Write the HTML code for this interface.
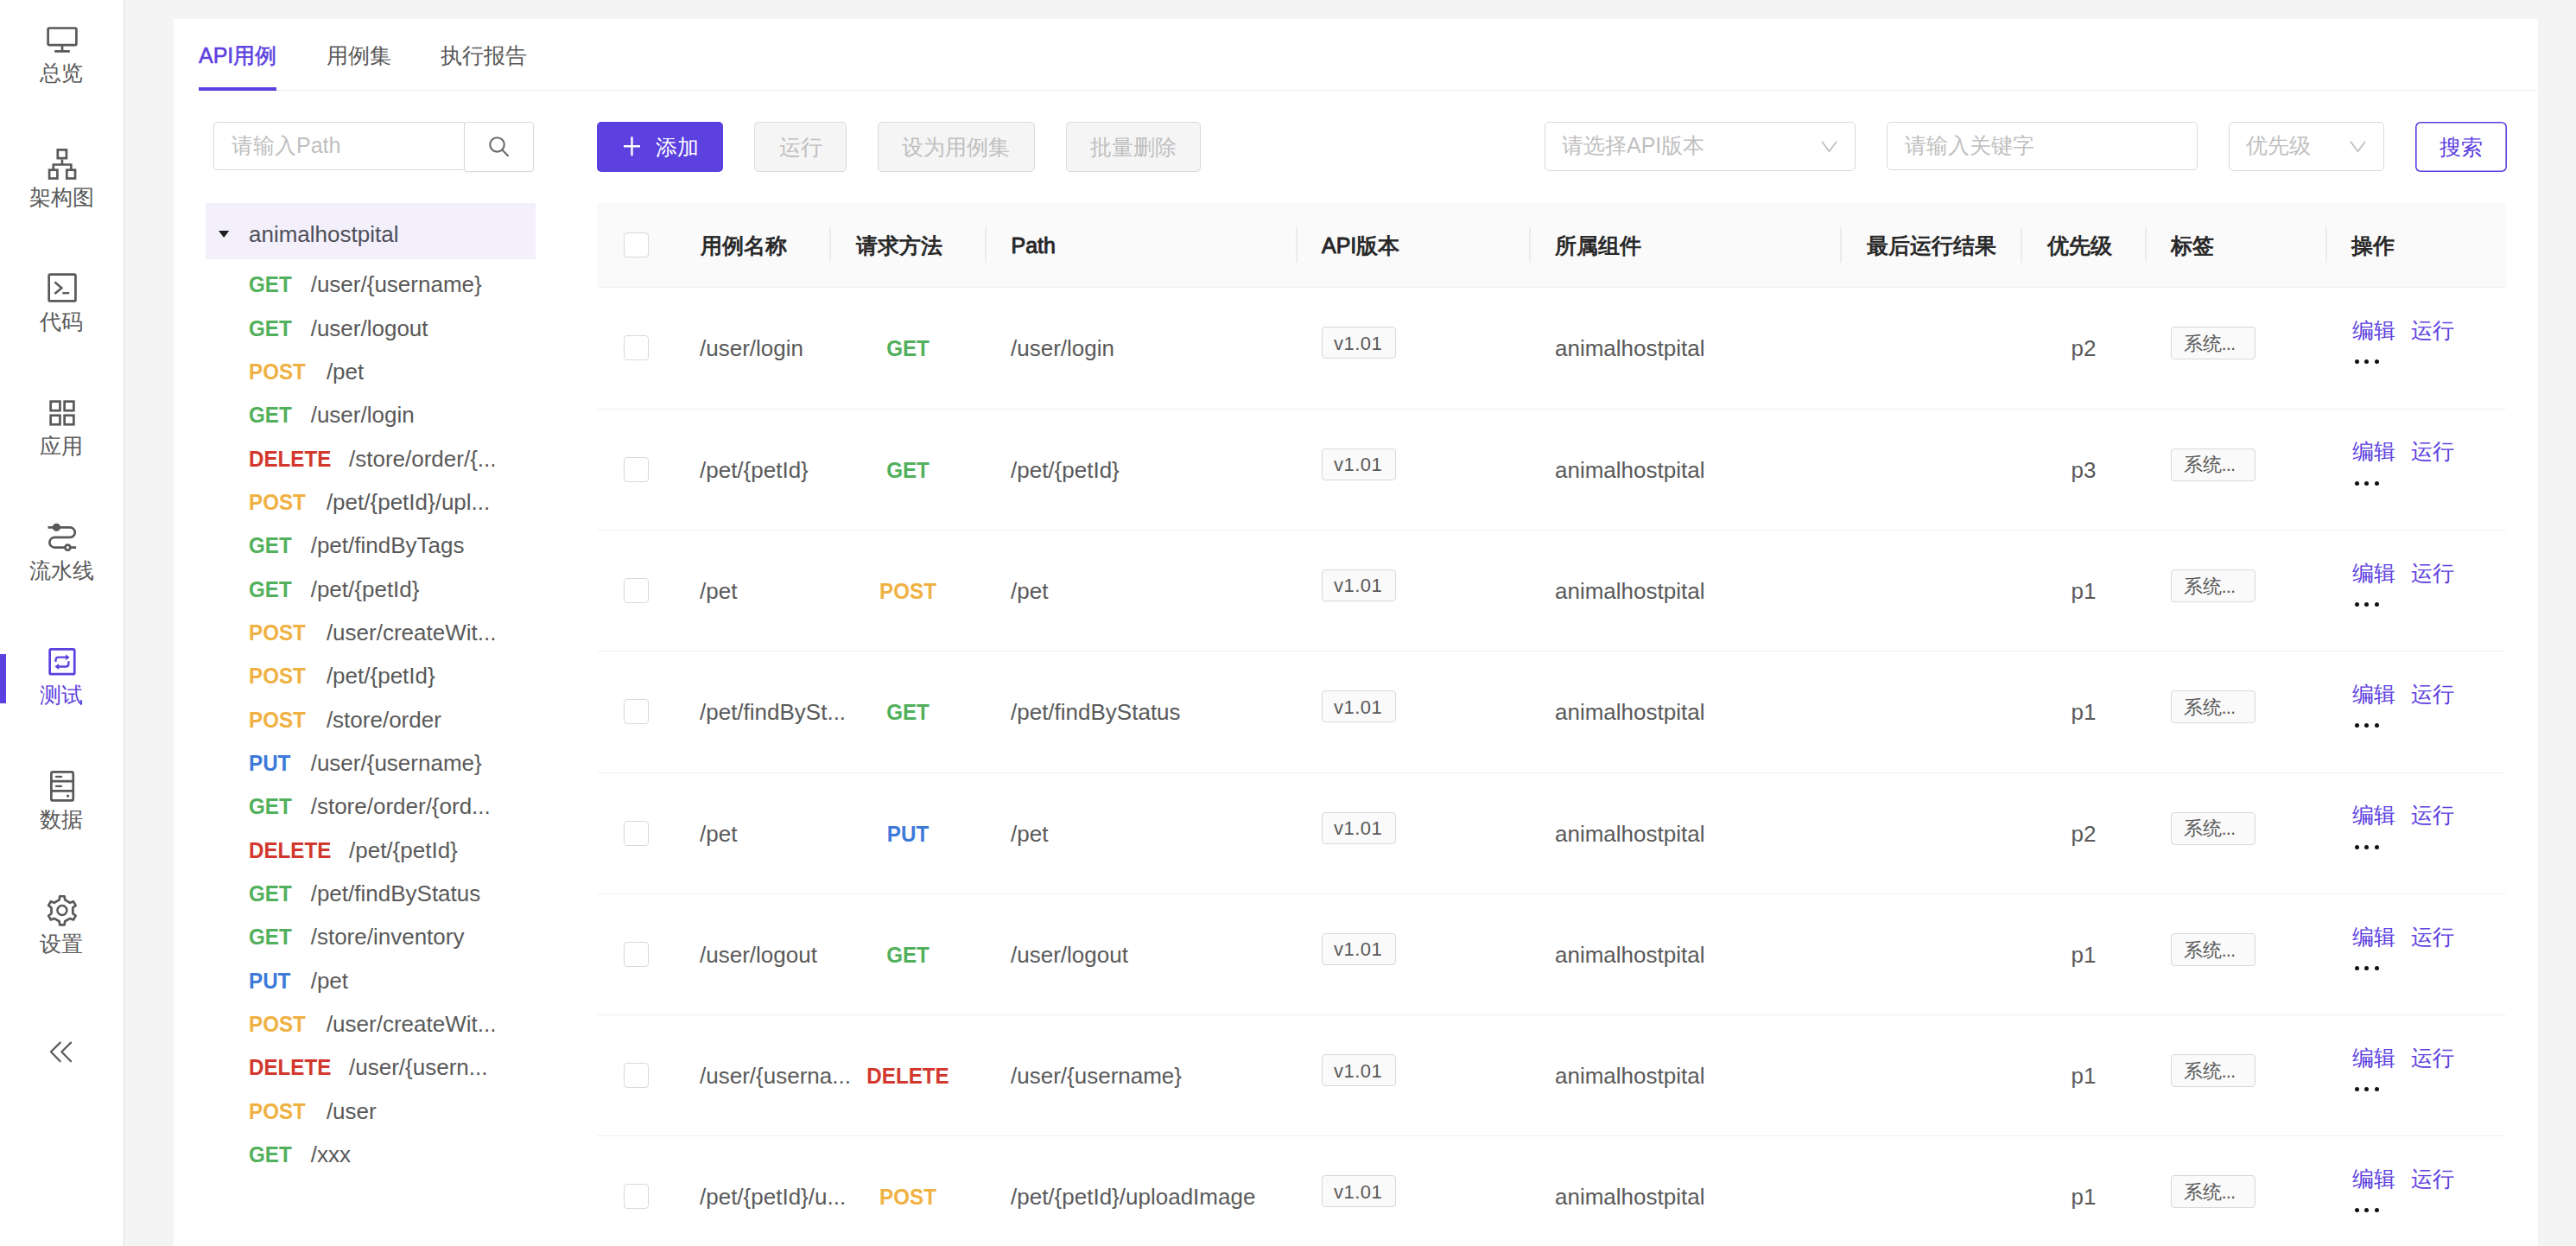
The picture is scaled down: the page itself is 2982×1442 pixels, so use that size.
<!DOCTYPE html>
<html><head><meta charset="utf-8"><style>
html,body{margin:0;padding:0;width:2982px;height:1442px;overflow:hidden;background:#f4f4f4;font-family:"Liberation Sans",sans-serif}
.t{position:absolute;white-space:nowrap}
</style></head><body>
<div style="position:absolute;left:0px;top:0px;width:143px;height:1442px;background:#fff"></div>
<div style="position:absolute;left:143px;top:0px;width:1px;height:1442px;background:#dedede"></div>
<div class="t" style="left:-228.7px;width:600px;text-align:center;top:71.8px;font-size:25px;line-height:25px;color:#595959;font-weight:normal;">总览</div>
<div class="t" style="left:-228.7px;width:600px;text-align:center;top:215.8px;font-size:25px;line-height:25px;color:#595959;font-weight:normal;">架构图</div>
<div class="t" style="left:-228.7px;width:600px;text-align:center;top:359.8px;font-size:25px;line-height:25px;color:#595959;font-weight:normal;">代码</div>
<div class="t" style="left:-228.7px;width:600px;text-align:center;top:503.8px;font-size:25px;line-height:25px;color:#595959;font-weight:normal;">应用</div>
<div class="t" style="left:-228.7px;width:600px;text-align:center;top:647.8px;font-size:25px;line-height:25px;color:#595959;font-weight:normal;">流水线</div>
<div class="t" style="left:-228.7px;width:600px;text-align:center;top:791.8px;font-size:25px;line-height:25px;color:#5c40e0;font-weight:normal;">测试</div>
<div class="t" style="left:-228.7px;width:600px;text-align:center;top:935.8px;font-size:25px;line-height:25px;color:#595959;font-weight:normal;">数据</div>
<div class="t" style="left:-228.7px;width:600px;text-align:center;top:1079.8px;font-size:25px;line-height:25px;color:#595959;font-weight:normal;">设置</div>
<div style="position:absolute;left:0px;top:757px;width:7px;height:57px;background:#5c40e0"></div>
<svg style="position:absolute;left:0;top:0" width="143" height="1442" viewBox="0 0 143 1442" fill="none" stroke="#595959" stroke-width="2.7">
<rect x="55.6" y="32.5" width="32.8" height="19.6" rx="1.5"/>
<path d="M72,53 V59.4 M63.2,59.4 H80.8"/>
<rect x="66.8" y="173.4" width="10.1" height="9.7"/>
<path d="M71.9,184.4 V190.5 M61.8,196.7 V190.5 H82.3 V196.7"/>
<rect x="57.1" y="196.7" width="9.3" height="9.8"/>
<rect x="77.3" y="196.7" width="9.7" height="9.8"/>
<rect x="56.65" y="317.55" width="30.8" height="30.9" rx="1.5"/>
<path d="M63.4,326.5 L71.4,333.3 L63.4,340" stroke-width="2.5"/>
<path d="M72.3,339.2 H80.2" stroke-width="2.3"/>
<rect x="58.65" y="464.65" width="10.8" height="10.5"/>
<rect x="74.65" y="464.65" width="10.7" height="10.5"/>
<rect x="58.65" y="480.75" width="10.8" height="10.5"/>
<rect x="74.65" y="480.75" width="10.7" height="10.5"/>
<path d="M55.5,610.4 H81 A5.75,5.75 0 0 1 81,621.9 H63.2 A5.85,5.85 0 0 0 63.2,633.6 H88.1"/>
<circle cx="65.4" cy="610.3" r="4.6" fill="#595959" stroke="none"/>
<circle cx="78.4" cy="633.6" r="3" fill="#fff"/>
<g stroke="#5c40e0">
<rect x="57.65" y="751.45" width="28.6" height="28.7" rx="1.5"/>
<path d="M64.5,766 V764 Q64.5,760.7 67.8,760.7 H77" stroke-width="2.3"/>
<path d="M76.1,757.2 L80.6,760.7 L76.1,764.2 Z" fill="#5c40e0" stroke="none"/>
<path d="M79.4,765.3 V768.2 Q79.4,771.5 76.1,771.5 H67" stroke-width="2.3"/>
<path d="M68.1,768.1 L63.3,771.5 L68.1,774.9 Z" fill="#5c40e0" stroke="none"/>
</g>
<rect x="59.35" y="893.45" width="25.4" height="33" rx="2"/>
<path d="M59.35,904.2 H84.75 M59.35,915.3 H84.75"/>
<path d="M65,898.9 H71 M65,909.9 H71" stroke-width="2.3" stroke-linecap="round"/>
<circle cx="78.6" cy="921.1" r="1.7" fill="#595959" stroke="none"/>
<path d="M68.60,1041.45 L69.20,1037.25 L74.60,1037.25 L75.20,1041.45 L80.99,1044.79 L84.93,1043.21 L87.63,1047.89 L84.29,1050.51 L84.29,1057.19 L87.63,1059.81 L84.93,1064.49 L80.99,1062.91 L75.20,1066.25 L74.60,1070.45 L69.20,1070.45 L68.60,1066.25 L62.81,1062.91 L58.87,1064.49 L56.17,1059.81 L59.51,1057.19 L59.51,1050.51 L56.17,1047.89 L58.87,1043.21 L62.81,1044.79 Z" stroke-linejoin="round"/>
<circle cx="71.9" cy="1053.5" r="5.5" stroke-width="2.5"/>
<path d="M69.7,1206.6 L58.9,1217.2 L69.7,1228.2 M82.1,1206.6 L71.3,1217.2 L82.1,1228.2" stroke-width="2.2" stroke-linecap="round" stroke-linejoin="round"/>
</svg>
<div style="position:absolute;left:201px;top:22px;width:2737px;height:1420px;background:#fff"></div>
<div class="t" style="left:230.0px;top:51.8px;font-size:25px;line-height:25px;color:#5c40e0;font-weight:normal;-webkit-text-stroke:0.55px #5c40e0">API用例</div>
<div class="t" style="left:377.5px;top:51.8px;font-size:25px;line-height:25px;color:#595959;font-weight:normal;">用例集</div>
<div class="t" style="left:510.0px;top:51.8px;font-size:25px;line-height:25px;color:#595959;font-weight:normal;">执行报告</div>
<div style="position:absolute;left:230px;top:104px;width:2708px;height:1px;background:#ebebeb"></div>
<div style="position:absolute;left:230px;top:101px;width:90px;height:4px;background:#5c40e0"></div>
<div style="position:absolute;left:247px;top:141px;width:291px;height:56px;box-sizing:border-box;border:1px solid #d9d9d9;border-radius:4px 0 0 4px;background:#fff"></div>
<div style="position:absolute;left:537px;top:141px;width:81px;height:58px;box-sizing:border-box;border:1px solid #d9d9d9;border-radius:4px;background:#fff;box-shadow:0 1px 2px rgba(0,0,0,0.03)"></div>
<div class="t" style="left:268.0px;top:156.3px;font-size:25px;line-height:25px;color:#bfbfbf;font-weight:normal;">请输入Path</div>
<svg style="position:absolute;left:560px;top:150px" width="40" height="40" viewBox="560 150 40 40" fill="none" stroke="#6a6a6a" stroke-width="2.1"><circle cx="575.5" cy="167.4" r="8.2"/><path d="M581.4,173.6 L588,180.2" stroke-linecap="round"/></svg>
<div style="position:absolute;left:238px;top:235px;width:382px;height:65px;background:#f3f0fc"></div>
<svg style="position:absolute;left:250px;top:264px" width="20" height="14" viewBox="250 264 20 14"><path d="M253,267 H265.3 L259.15,275 Z" fill="#1f1f1f"/></svg>
<div class="t" style="left:288.0px;top:258.4px;font-size:26px;line-height:26px;color:#4e4e58;font-weight:normal;">animalhostpital</div>
<div class="t" style="left:287.5px;top:316.2px;font-size:26px;line-height:26px;color:#52b05d;font-weight:bold;transform:scaleX(0.93);transform-origin:0 0">GET</div>
<div class="t" style="left:359.7px;top:316.2px;font-size:26px;line-height:26px;color:#595959;font-weight:normal;">/user/{username}</div>
<div class="t" style="left:287.5px;top:366.5px;font-size:26px;line-height:26px;color:#52b05d;font-weight:bold;transform:scaleX(0.93);transform-origin:0 0">GET</div>
<div class="t" style="left:359.7px;top:366.5px;font-size:26px;line-height:26px;color:#595959;font-weight:normal;">/user/logout</div>
<div class="t" style="left:287.5px;top:416.9px;font-size:26px;line-height:26px;color:#f0b143;font-weight:bold;transform:scaleX(0.93);transform-origin:0 0">POST</div>
<div class="t" style="left:377.9px;top:416.9px;font-size:26px;line-height:26px;color:#595959;font-weight:normal;">/pet</div>
<div class="t" style="left:287.5px;top:467.2px;font-size:26px;line-height:26px;color:#52b05d;font-weight:bold;transform:scaleX(0.93);transform-origin:0 0">GET</div>
<div class="t" style="left:359.7px;top:467.2px;font-size:26px;line-height:26px;color:#595959;font-weight:normal;">/user/login</div>
<div class="t" style="left:287.5px;top:517.5px;font-size:26px;line-height:26px;color:#d2382e;font-weight:bold;transform:scaleX(0.93);transform-origin:0 0">DELETE</div>
<div class="t" style="left:404.0px;top:517.5px;font-size:26px;line-height:26px;color:#595959;font-weight:normal;">/store/order/{...</div>
<div class="t" style="left:287.5px;top:567.8px;font-size:26px;line-height:26px;color:#f0b143;font-weight:bold;transform:scaleX(0.93);transform-origin:0 0">POST</div>
<div class="t" style="left:377.9px;top:567.8px;font-size:26px;line-height:26px;color:#595959;font-weight:normal;">/pet/{petId}/upl...</div>
<div class="t" style="left:287.5px;top:618.2px;font-size:26px;line-height:26px;color:#52b05d;font-weight:bold;transform:scaleX(0.93);transform-origin:0 0">GET</div>
<div class="t" style="left:359.7px;top:618.2px;font-size:26px;line-height:26px;color:#595959;font-weight:normal;">/pet/findByTags</div>
<div class="t" style="left:287.5px;top:668.5px;font-size:26px;line-height:26px;color:#52b05d;font-weight:bold;transform:scaleX(0.93);transform-origin:0 0">GET</div>
<div class="t" style="left:359.7px;top:668.5px;font-size:26px;line-height:26px;color:#595959;font-weight:normal;">/pet/{petId}</div>
<div class="t" style="left:287.5px;top:718.8px;font-size:26px;line-height:26px;color:#f0b143;font-weight:bold;transform:scaleX(0.93);transform-origin:0 0">POST</div>
<div class="t" style="left:377.9px;top:718.8px;font-size:26px;line-height:26px;color:#595959;font-weight:normal;">/user/createWit...</div>
<div class="t" style="left:287.5px;top:769.2px;font-size:26px;line-height:26px;color:#f0b143;font-weight:bold;transform:scaleX(0.93);transform-origin:0 0">POST</div>
<div class="t" style="left:377.9px;top:769.2px;font-size:26px;line-height:26px;color:#595959;font-weight:normal;">/pet/{petId}</div>
<div class="t" style="left:287.5px;top:819.5px;font-size:26px;line-height:26px;color:#f0b143;font-weight:bold;transform:scaleX(0.93);transform-origin:0 0">POST</div>
<div class="t" style="left:377.9px;top:819.5px;font-size:26px;line-height:26px;color:#595959;font-weight:normal;">/store/order</div>
<div class="t" style="left:287.5px;top:869.8px;font-size:26px;line-height:26px;color:#3d79d9;font-weight:bold;transform:scaleX(0.93);transform-origin:0 0">PUT</div>
<div class="t" style="left:359.7px;top:869.8px;font-size:26px;line-height:26px;color:#595959;font-weight:normal;">/user/{username}</div>
<div class="t" style="left:287.5px;top:920.2px;font-size:26px;line-height:26px;color:#52b05d;font-weight:bold;transform:scaleX(0.93);transform-origin:0 0">GET</div>
<div class="t" style="left:359.7px;top:920.2px;font-size:26px;line-height:26px;color:#595959;font-weight:normal;">/store/order/{ord...</div>
<div class="t" style="left:287.5px;top:970.5px;font-size:26px;line-height:26px;color:#d2382e;font-weight:bold;transform:scaleX(0.93);transform-origin:0 0">DELETE</div>
<div class="t" style="left:404.0px;top:970.5px;font-size:26px;line-height:26px;color:#595959;font-weight:normal;">/pet/{petId}</div>
<div class="t" style="left:287.5px;top:1020.8px;font-size:26px;line-height:26px;color:#52b05d;font-weight:bold;transform:scaleX(0.93);transform-origin:0 0">GET</div>
<div class="t" style="left:359.7px;top:1020.8px;font-size:26px;line-height:26px;color:#595959;font-weight:normal;">/pet/findByStatus</div>
<div class="t" style="left:287.5px;top:1071.1px;font-size:26px;line-height:26px;color:#52b05d;font-weight:bold;transform:scaleX(0.93);transform-origin:0 0">GET</div>
<div class="t" style="left:359.7px;top:1071.1px;font-size:26px;line-height:26px;color:#595959;font-weight:normal;">/store/inventory</div>
<div class="t" style="left:287.5px;top:1121.5px;font-size:26px;line-height:26px;color:#3d79d9;font-weight:bold;transform:scaleX(0.93);transform-origin:0 0">PUT</div>
<div class="t" style="left:359.7px;top:1121.5px;font-size:26px;line-height:26px;color:#595959;font-weight:normal;">/pet</div>
<div class="t" style="left:287.5px;top:1171.8px;font-size:26px;line-height:26px;color:#f0b143;font-weight:bold;transform:scaleX(0.93);transform-origin:0 0">POST</div>
<div class="t" style="left:377.9px;top:1171.8px;font-size:26px;line-height:26px;color:#595959;font-weight:normal;">/user/createWit...</div>
<div class="t" style="left:287.5px;top:1222.1px;font-size:26px;line-height:26px;color:#d2382e;font-weight:bold;transform:scaleX(0.93);transform-origin:0 0">DELETE</div>
<div class="t" style="left:404.0px;top:1222.1px;font-size:26px;line-height:26px;color:#595959;font-weight:normal;">/user/{usern...</div>
<div class="t" style="left:287.5px;top:1272.5px;font-size:26px;line-height:26px;color:#f0b143;font-weight:bold;transform:scaleX(0.93);transform-origin:0 0">POST</div>
<div class="t" style="left:377.9px;top:1272.5px;font-size:26px;line-height:26px;color:#595959;font-weight:normal;">/user</div>
<div class="t" style="left:287.5px;top:1322.8px;font-size:26px;line-height:26px;color:#52b05d;font-weight:bold;transform:scaleX(0.93);transform-origin:0 0">GET</div>
<div class="t" style="left:359.7px;top:1322.8px;font-size:26px;line-height:26px;color:#595959;font-weight:normal;">/xxx</div>
<div style="position:absolute;left:691px;top:141px;width:146px;height:58px;background:#5c40e0;border-radius:5px"></div>
<svg style="position:absolute;left:718px;top:154px" width="28" height="30" viewBox="718 154 28 30" stroke="#fff" stroke-width="2.4" fill="none"><path d="M731.5,158.3 V180.3 M722,169.3 H741"/></svg>
<div class="t" style="left:758.5px;top:157.5px;font-size:25px;line-height:25px;color:#fff;font-weight:normal;">添加</div>
<div style="position:absolute;left:873px;top:141px;width:107px;height:58px;box-sizing:border-box;border:1px solid #d9d9d9;border-radius:5px;background:#f5f5f5"></div>
<div class="t" style="left:901.5px;top:157.5px;font-size:25px;line-height:25px;color:#bfbfbf;font-weight:normal;">运行</div>
<div style="position:absolute;left:1016px;top:141px;width:182px;height:58px;box-sizing:border-box;border:1px solid #d9d9d9;border-radius:5px;background:#f5f5f5"></div>
<div class="t" style="left:1044.0px;top:157.5px;font-size:25px;line-height:25px;color:#bfbfbf;font-weight:normal;">设为用例集</div>
<div style="position:absolute;left:1234px;top:141px;width:156px;height:58px;box-sizing:border-box;border:1px solid #d9d9d9;border-radius:5px;background:#f5f5f5"></div>
<div class="t" style="left:1261.5px;top:157.5px;font-size:25px;line-height:25px;color:#bfbfbf;font-weight:normal;">批量删除</div>
<div style="position:absolute;left:1788px;top:141px;width:360px;height:57px;box-sizing:border-box;border:1px solid #d9d9d9;border-radius:5px;background:#fff"></div>
<div class="t" style="left:1808.0px;top:156.3px;font-size:25px;line-height:25px;color:#bfbfbf;font-weight:normal;">请选择API版本</div>
<div style="position:absolute;left:2184px;top:141px;width:360px;height:56px;box-sizing:border-box;border:1px solid #d9d9d9;border-radius:5px;background:#fff"></div>
<div class="t" style="left:2204.5px;top:156.3px;font-size:25px;line-height:25px;color:#bfbfbf;font-weight:normal;">请输入关键字</div>
<div style="position:absolute;left:2580px;top:141px;width:180px;height:57px;box-sizing:border-box;border:1px solid #d9d9d9;border-radius:5px;background:#fff"></div>
<div class="t" style="left:2600.0px;top:156.3px;font-size:25px;line-height:25px;color:#bfbfbf;font-weight:normal;">优先级</div>
<svg style="position:absolute;left:2106.5px;top:160px" width="22" height="20" viewBox="2106.5 160 22 20" fill="none" stroke="#bfbfbf" stroke-width="1.8"><path d="M2108.5,163.8 L2117.0,175.2 L2125.5,163.8"/></svg>
<svg style="position:absolute;left:2718.7px;top:160px" width="22" height="20" viewBox="2718.7 160 22 20" fill="none" stroke="#bfbfbf" stroke-width="1.8"><path d="M2720.7,163.8 L2729.2,175.2 L2737.7,163.8"/></svg>
<div style="position:absolute;left:2796px;top:141px;width:106px;height:58px;box-sizing:border-box;box-shadow:inset 0 0 0 1.6px #5c40e0;border-radius:6px;background:#fff"></div>
<div class="t" style="left:2824.0px;top:157.5px;font-size:25px;line-height:25px;color:#5c40e0;font-weight:normal;">搜索</div>
<div style="position:absolute;left:691px;top:235px;width:2210px;height:97px;background:#fafafa"></div>
<div style="position:absolute;left:691px;top:332px;width:2210px;height:1px;background:#efefef"></div>
<div style="position:absolute;left:722px;top:269px;width:29px;height:29px;box-sizing:border-box;border:1px solid #d9d9d9;border-radius:4px;background:#fff"></div>
<div class="t" style="left:810.5px;top:272.3px;font-size:25px;line-height:25px;color:#262626;font-weight:normal;-webkit-text-stroke:0.9px #262626">用例名称</div>
<div class="t" style="left:990.5px;top:272.3px;font-size:25px;line-height:25px;color:#262626;font-weight:normal;-webkit-text-stroke:0.9px #262626">请求方法</div>
<div class="t" style="left:1170.5px;top:272.3px;font-size:25px;line-height:25px;color:#262626;font-weight:normal;-webkit-text-stroke:0.9px #262626">Path</div>
<div class="t" style="left:1530.0px;top:272.3px;font-size:25px;line-height:25px;color:#262626;font-weight:normal;-webkit-text-stroke:0.9px #262626">API版本</div>
<div class="t" style="left:1800.0px;top:272.3px;font-size:25px;line-height:25px;color:#262626;font-weight:normal;-webkit-text-stroke:0.9px #262626">所属组件</div>
<div class="t" style="left:2160.5px;top:272.3px;font-size:25px;line-height:25px;color:#262626;font-weight:normal;-webkit-text-stroke:0.9px #262626">最后运行结果</div>
<div class="t" style="left:2369.5px;top:272.3px;font-size:25px;line-height:25px;color:#262626;font-weight:normal;-webkit-text-stroke:0.9px #262626">优先级</div>
<div class="t" style="left:2513.0px;top:272.3px;font-size:25px;line-height:25px;color:#262626;font-weight:normal;-webkit-text-stroke:0.9px #262626">标签</div>
<div class="t" style="left:2722.0px;top:272.3px;font-size:25px;line-height:25px;color:#262626;font-weight:normal;-webkit-text-stroke:0.9px #262626">操作</div>
<div style="position:absolute;left:960px;top:263px;width:2px;height:41px;background:#ececec"></div>
<div style="position:absolute;left:1140px;top:263px;width:2px;height:41px;background:#ececec"></div>
<div style="position:absolute;left:1500px;top:263px;width:2px;height:41px;background:#ececec"></div>
<div style="position:absolute;left:1770px;top:263px;width:2px;height:41px;background:#ececec"></div>
<div style="position:absolute;left:2130px;top:263px;width:2px;height:41px;background:#ececec"></div>
<div style="position:absolute;left:2339px;top:263px;width:2px;height:41px;background:#ececec"></div>
<div style="position:absolute;left:2483px;top:263px;width:2px;height:41px;background:#ececec"></div>
<div style="position:absolute;left:2692px;top:263px;width:2px;height:41px;background:#ececec"></div>
<div style="position:absolute;left:722px;top:388px;width:29px;height:29px;box-sizing:border-box;border:1px solid #d9d9d9;border-radius:4px;background:#fff"></div>
<div class="t" style="left:810.0px;top:390.3px;font-size:26px;line-height:26px;color:#595959;font-weight:normal;">/user/login</div>
<div class="t" style="left:751.0px;width:600px;text-align:center;top:390.3px;font-size:26px;line-height:26px;color:#52b05d;font-weight:bold;transform:scaleX(0.93)">GET</div>
<div class="t" style="left:1170.0px;top:390.3px;font-size:26px;line-height:26px;color:#595959;font-weight:normal;">/user/login</div>
<div style="position:absolute;left:1530px;top:378px;width:86px;height:37px;box-sizing:border-box;border:1px solid #d9d9d9;border-radius:4px;background:#fafafa"></div>
<div class="t" style="left:1544.0px;top:386.7px;font-size:22px;line-height:22px;color:#595959;font-weight:normal;letter-spacing:0.5px">v1.01</div>
<div class="t" style="left:1800.0px;top:390.3px;font-size:26px;line-height:26px;color:#595959;font-weight:normal;">animalhostpital</div>
<div class="t" style="left:2112.0px;width:600px;text-align:center;top:390.3px;font-size:26px;line-height:26px;color:#595959;font-weight:normal;">p2</div>
<div style="position:absolute;left:2513px;top:378px;width:98px;height:38px;box-sizing:border-box;border:1px solid #d9d9d9;border-radius:4px;background:#fafafa"></div>
<div class="t" style="left:2527.5px;top:387.0px;font-size:22px;line-height:22px;color:#595959;font-weight:normal;">系统<span style="letter-spacing:-0.8px">...</span></div>
<div class="t" style="left:2722.5px;top:370.1px;font-size:25px;line-height:25px;color:#5c40e0;font-weight:normal;">编辑</div>
<div class="t" style="left:2790.5px;top:370.1px;font-size:25px;line-height:25px;color:#5c40e0;font-weight:normal;">运行</div>
<div style="position:absolute;left:2726.0px;top:416.3px;width:5px;height:5px;border-radius:50%;background:#111"></div>
<div style="position:absolute;left:2737.4px;top:416.3px;width:5px;height:5px;border-radius:50%;background:#111"></div>
<div style="position:absolute;left:2748.8px;top:416.3px;width:5px;height:5px;border-radius:50%;background:#111"></div>
<div style="position:absolute;left:691px;top:473px;width:2210px;height:1px;background:#efefef"></div>
<div style="position:absolute;left:722px;top:529px;width:29px;height:29px;box-sizing:border-box;border:1px solid #d9d9d9;border-radius:4px;background:#fff"></div>
<div class="t" style="left:810.0px;top:530.6px;font-size:26px;line-height:26px;color:#595959;font-weight:normal;">/pet/{petId}</div>
<div class="t" style="left:751.0px;width:600px;text-align:center;top:530.6px;font-size:26px;line-height:26px;color:#52b05d;font-weight:bold;transform:scaleX(0.93)">GET</div>
<div class="t" style="left:1170.0px;top:530.6px;font-size:26px;line-height:26px;color:#595959;font-weight:normal;">/pet/{petId}</div>
<div style="position:absolute;left:1530px;top:519px;width:86px;height:37px;box-sizing:border-box;border:1px solid #d9d9d9;border-radius:4px;background:#fafafa"></div>
<div class="t" style="left:1544.0px;top:527.0px;font-size:22px;line-height:22px;color:#595959;font-weight:normal;letter-spacing:0.5px">v1.01</div>
<div class="t" style="left:1800.0px;top:530.6px;font-size:26px;line-height:26px;color:#595959;font-weight:normal;">animalhostpital</div>
<div class="t" style="left:2112.0px;width:600px;text-align:center;top:530.6px;font-size:26px;line-height:26px;color:#595959;font-weight:normal;">p3</div>
<div style="position:absolute;left:2513px;top:519px;width:98px;height:38px;box-sizing:border-box;border:1px solid #d9d9d9;border-radius:4px;background:#fafafa"></div>
<div class="t" style="left:2527.5px;top:527.3px;font-size:22px;line-height:22px;color:#595959;font-weight:normal;">系统<span style="letter-spacing:-0.8px">...</span></div>
<div class="t" style="left:2722.5px;top:510.4px;font-size:25px;line-height:25px;color:#5c40e0;font-weight:normal;">编辑</div>
<div class="t" style="left:2790.5px;top:510.4px;font-size:25px;line-height:25px;color:#5c40e0;font-weight:normal;">运行</div>
<div style="position:absolute;left:2726.0px;top:556.6px;width:5px;height:5px;border-radius:50%;background:#111"></div>
<div style="position:absolute;left:2737.4px;top:556.6px;width:5px;height:5px;border-radius:50%;background:#111"></div>
<div style="position:absolute;left:2748.8px;top:556.6px;width:5px;height:5px;border-radius:50%;background:#111"></div>
<div style="position:absolute;left:691px;top:613px;width:2210px;height:1px;background:#efefef"></div>
<div style="position:absolute;left:722px;top:669px;width:29px;height:29px;box-sizing:border-box;border:1px solid #d9d9d9;border-radius:4px;background:#fff"></div>
<div class="t" style="left:810.0px;top:670.9px;font-size:26px;line-height:26px;color:#595959;font-weight:normal;">/pet</div>
<div class="t" style="left:751.0px;width:600px;text-align:center;top:670.9px;font-size:26px;line-height:26px;color:#f0b143;font-weight:bold;transform:scaleX(0.93)">POST</div>
<div class="t" style="left:1170.0px;top:670.9px;font-size:26px;line-height:26px;color:#595959;font-weight:normal;">/pet</div>
<div style="position:absolute;left:1530px;top:659px;width:86px;height:37px;box-sizing:border-box;border:1px solid #d9d9d9;border-radius:4px;background:#fafafa"></div>
<div class="t" style="left:1544.0px;top:667.3px;font-size:22px;line-height:22px;color:#595959;font-weight:normal;letter-spacing:0.5px">v1.01</div>
<div class="t" style="left:1800.0px;top:670.9px;font-size:26px;line-height:26px;color:#595959;font-weight:normal;">animalhostpital</div>
<div class="t" style="left:2112.0px;width:600px;text-align:center;top:670.9px;font-size:26px;line-height:26px;color:#595959;font-weight:normal;">p1</div>
<div style="position:absolute;left:2513px;top:659px;width:98px;height:38px;box-sizing:border-box;border:1px solid #d9d9d9;border-radius:4px;background:#fafafa"></div>
<div class="t" style="left:2527.5px;top:667.6px;font-size:22px;line-height:22px;color:#595959;font-weight:normal;">系统<span style="letter-spacing:-0.8px">...</span></div>
<div class="t" style="left:2722.5px;top:650.7px;font-size:25px;line-height:25px;color:#5c40e0;font-weight:normal;">编辑</div>
<div class="t" style="left:2790.5px;top:650.7px;font-size:25px;line-height:25px;color:#5c40e0;font-weight:normal;">运行</div>
<div style="position:absolute;left:2726.0px;top:696.9px;width:5px;height:5px;border-radius:50%;background:#111"></div>
<div style="position:absolute;left:2737.4px;top:696.9px;width:5px;height:5px;border-radius:50%;background:#111"></div>
<div style="position:absolute;left:2748.8px;top:696.9px;width:5px;height:5px;border-radius:50%;background:#111"></div>
<div style="position:absolute;left:691px;top:753px;width:2210px;height:1px;background:#efefef"></div>
<div style="position:absolute;left:722px;top:809px;width:29px;height:29px;box-sizing:border-box;border:1px solid #d9d9d9;border-radius:4px;background:#fff"></div>
<div class="t" style="left:810.0px;top:811.2px;font-size:26px;line-height:26px;color:#595959;font-weight:normal;">/pet/findBySt...</div>
<div class="t" style="left:751.0px;width:600px;text-align:center;top:811.2px;font-size:26px;line-height:26px;color:#52b05d;font-weight:bold;transform:scaleX(0.93)">GET</div>
<div class="t" style="left:1170.0px;top:811.2px;font-size:26px;line-height:26px;color:#595959;font-weight:normal;">/pet/findByStatus</div>
<div style="position:absolute;left:1530px;top:799px;width:86px;height:37px;box-sizing:border-box;border:1px solid #d9d9d9;border-radius:4px;background:#fafafa"></div>
<div class="t" style="left:1544.0px;top:807.6px;font-size:22px;line-height:22px;color:#595959;font-weight:normal;letter-spacing:0.5px">v1.01</div>
<div class="t" style="left:1800.0px;top:811.2px;font-size:26px;line-height:26px;color:#595959;font-weight:normal;">animalhostpital</div>
<div class="t" style="left:2112.0px;width:600px;text-align:center;top:811.2px;font-size:26px;line-height:26px;color:#595959;font-weight:normal;">p1</div>
<div style="position:absolute;left:2513px;top:799px;width:98px;height:38px;box-sizing:border-box;border:1px solid #d9d9d9;border-radius:4px;background:#fafafa"></div>
<div class="t" style="left:2527.5px;top:807.9px;font-size:22px;line-height:22px;color:#595959;font-weight:normal;">系统<span style="letter-spacing:-0.8px">...</span></div>
<div class="t" style="left:2722.5px;top:791.0px;font-size:25px;line-height:25px;color:#5c40e0;font-weight:normal;">编辑</div>
<div class="t" style="left:2790.5px;top:791.0px;font-size:25px;line-height:25px;color:#5c40e0;font-weight:normal;">运行</div>
<div style="position:absolute;left:2726.0px;top:837.2px;width:5px;height:5px;border-radius:50%;background:#111"></div>
<div style="position:absolute;left:2737.4px;top:837.2px;width:5px;height:5px;border-radius:50%;background:#111"></div>
<div style="position:absolute;left:2748.8px;top:837.2px;width:5px;height:5px;border-radius:50%;background:#111"></div>
<div style="position:absolute;left:691px;top:894px;width:2210px;height:1px;background:#efefef"></div>
<div style="position:absolute;left:722px;top:950px;width:29px;height:29px;box-sizing:border-box;border:1px solid #d9d9d9;border-radius:4px;background:#fff"></div>
<div class="t" style="left:810.0px;top:951.5px;font-size:26px;line-height:26px;color:#595959;font-weight:normal;">/pet</div>
<div class="t" style="left:751.0px;width:600px;text-align:center;top:951.5px;font-size:26px;line-height:26px;color:#3d79d9;font-weight:bold;transform:scaleX(0.93)">PUT</div>
<div class="t" style="left:1170.0px;top:951.5px;font-size:26px;line-height:26px;color:#595959;font-weight:normal;">/pet</div>
<div style="position:absolute;left:1530px;top:940px;width:86px;height:37px;box-sizing:border-box;border:1px solid #d9d9d9;border-radius:4px;background:#fafafa"></div>
<div class="t" style="left:1544.0px;top:947.9px;font-size:22px;line-height:22px;color:#595959;font-weight:normal;letter-spacing:0.5px">v1.01</div>
<div class="t" style="left:1800.0px;top:951.5px;font-size:26px;line-height:26px;color:#595959;font-weight:normal;">animalhostpital</div>
<div class="t" style="left:2112.0px;width:600px;text-align:center;top:951.5px;font-size:26px;line-height:26px;color:#595959;font-weight:normal;">p2</div>
<div style="position:absolute;left:2513px;top:940px;width:98px;height:38px;box-sizing:border-box;border:1px solid #d9d9d9;border-radius:4px;background:#fafafa"></div>
<div class="t" style="left:2527.5px;top:948.2px;font-size:22px;line-height:22px;color:#595959;font-weight:normal;">系统<span style="letter-spacing:-0.8px">...</span></div>
<div class="t" style="left:2722.5px;top:931.3px;font-size:25px;line-height:25px;color:#5c40e0;font-weight:normal;">编辑</div>
<div class="t" style="left:2790.5px;top:931.3px;font-size:25px;line-height:25px;color:#5c40e0;font-weight:normal;">运行</div>
<div style="position:absolute;left:2726.0px;top:977.5px;width:5px;height:5px;border-radius:50%;background:#111"></div>
<div style="position:absolute;left:2737.4px;top:977.5px;width:5px;height:5px;border-radius:50%;background:#111"></div>
<div style="position:absolute;left:2748.8px;top:977.5px;width:5px;height:5px;border-radius:50%;background:#111"></div>
<div style="position:absolute;left:691px;top:1034px;width:2210px;height:1px;background:#efefef"></div>
<div style="position:absolute;left:722px;top:1090px;width:29px;height:29px;box-sizing:border-box;border:1px solid #d9d9d9;border-radius:4px;background:#fff"></div>
<div class="t" style="left:810.0px;top:1091.8px;font-size:26px;line-height:26px;color:#595959;font-weight:normal;">/user/logout</div>
<div class="t" style="left:751.0px;width:600px;text-align:center;top:1091.8px;font-size:26px;line-height:26px;color:#52b05d;font-weight:bold;transform:scaleX(0.93)">GET</div>
<div class="t" style="left:1170.0px;top:1091.8px;font-size:26px;line-height:26px;color:#595959;font-weight:normal;">/user/logout</div>
<div style="position:absolute;left:1530px;top:1080px;width:86px;height:37px;box-sizing:border-box;border:1px solid #d9d9d9;border-radius:4px;background:#fafafa"></div>
<div class="t" style="left:1544.0px;top:1088.2px;font-size:22px;line-height:22px;color:#595959;font-weight:normal;letter-spacing:0.5px">v1.01</div>
<div class="t" style="left:1800.0px;top:1091.8px;font-size:26px;line-height:26px;color:#595959;font-weight:normal;">animalhostpital</div>
<div class="t" style="left:2112.0px;width:600px;text-align:center;top:1091.8px;font-size:26px;line-height:26px;color:#595959;font-weight:normal;">p1</div>
<div style="position:absolute;left:2513px;top:1080px;width:98px;height:38px;box-sizing:border-box;border:1px solid #d9d9d9;border-radius:4px;background:#fafafa"></div>
<div class="t" style="left:2527.5px;top:1088.5px;font-size:22px;line-height:22px;color:#595959;font-weight:normal;">系统<span style="letter-spacing:-0.8px">...</span></div>
<div class="t" style="left:2722.5px;top:1071.6px;font-size:25px;line-height:25px;color:#5c40e0;font-weight:normal;">编辑</div>
<div class="t" style="left:2790.5px;top:1071.6px;font-size:25px;line-height:25px;color:#5c40e0;font-weight:normal;">运行</div>
<div style="position:absolute;left:2726.0px;top:1117.8px;width:5px;height:5px;border-radius:50%;background:#111"></div>
<div style="position:absolute;left:2737.4px;top:1117.8px;width:5px;height:5px;border-radius:50%;background:#111"></div>
<div style="position:absolute;left:2748.8px;top:1117.8px;width:5px;height:5px;border-radius:50%;background:#111"></div>
<div style="position:absolute;left:691px;top:1174px;width:2210px;height:1px;background:#efefef"></div>
<div style="position:absolute;left:722px;top:1230px;width:29px;height:29px;box-sizing:border-box;border:1px solid #d9d9d9;border-radius:4px;background:#fff"></div>
<div class="t" style="left:810.0px;top:1232.1px;font-size:26px;line-height:26px;color:#595959;font-weight:normal;">/user/{userna...</div>
<div class="t" style="left:751.0px;width:600px;text-align:center;top:1232.1px;font-size:26px;line-height:26px;color:#d2382e;font-weight:bold;transform:scaleX(0.93)">DELETE</div>
<div class="t" style="left:1170.0px;top:1232.1px;font-size:26px;line-height:26px;color:#595959;font-weight:normal;">/user/{username}</div>
<div style="position:absolute;left:1530px;top:1220px;width:86px;height:37px;box-sizing:border-box;border:1px solid #d9d9d9;border-radius:4px;background:#fafafa"></div>
<div class="t" style="left:1544.0px;top:1228.5px;font-size:22px;line-height:22px;color:#595959;font-weight:normal;letter-spacing:0.5px">v1.01</div>
<div class="t" style="left:1800.0px;top:1232.1px;font-size:26px;line-height:26px;color:#595959;font-weight:normal;">animalhostpital</div>
<div class="t" style="left:2112.0px;width:600px;text-align:center;top:1232.1px;font-size:26px;line-height:26px;color:#595959;font-weight:normal;">p1</div>
<div style="position:absolute;left:2513px;top:1220px;width:98px;height:38px;box-sizing:border-box;border:1px solid #d9d9d9;border-radius:4px;background:#fafafa"></div>
<div class="t" style="left:2527.5px;top:1228.8px;font-size:22px;line-height:22px;color:#595959;font-weight:normal;">系统<span style="letter-spacing:-0.8px">...</span></div>
<div class="t" style="left:2722.5px;top:1211.9px;font-size:25px;line-height:25px;color:#5c40e0;font-weight:normal;">编辑</div>
<div class="t" style="left:2790.5px;top:1211.9px;font-size:25px;line-height:25px;color:#5c40e0;font-weight:normal;">运行</div>
<div style="position:absolute;left:2726.0px;top:1258.1px;width:5px;height:5px;border-radius:50%;background:#111"></div>
<div style="position:absolute;left:2737.4px;top:1258.1px;width:5px;height:5px;border-radius:50%;background:#111"></div>
<div style="position:absolute;left:2748.8px;top:1258.1px;width:5px;height:5px;border-radius:50%;background:#111"></div>
<div style="position:absolute;left:691px;top:1314px;width:2210px;height:1px;background:#efefef"></div>
<div style="position:absolute;left:722px;top:1370px;width:29px;height:29px;box-sizing:border-box;border:1px solid #d9d9d9;border-radius:4px;background:#fff"></div>
<div class="t" style="left:810.0px;top:1372.4px;font-size:26px;line-height:26px;color:#595959;font-weight:normal;">/pet/{petId}/u...</div>
<div class="t" style="left:751.0px;width:600px;text-align:center;top:1372.4px;font-size:26px;line-height:26px;color:#f0b143;font-weight:bold;transform:scaleX(0.93)">POST</div>
<div class="t" style="left:1170.0px;top:1372.4px;font-size:26px;line-height:26px;color:#595959;font-weight:normal;">/pet/{petId}/uploadImage</div>
<div style="position:absolute;left:1530px;top:1360px;width:86px;height:37px;box-sizing:border-box;border:1px solid #d9d9d9;border-radius:4px;background:#fafafa"></div>
<div class="t" style="left:1544.0px;top:1368.8px;font-size:22px;line-height:22px;color:#595959;font-weight:normal;letter-spacing:0.5px">v1.01</div>
<div class="t" style="left:1800.0px;top:1372.4px;font-size:26px;line-height:26px;color:#595959;font-weight:normal;">animalhostpital</div>
<div class="t" style="left:2112.0px;width:600px;text-align:center;top:1372.4px;font-size:26px;line-height:26px;color:#595959;font-weight:normal;">p1</div>
<div style="position:absolute;left:2513px;top:1360px;width:98px;height:38px;box-sizing:border-box;border:1px solid #d9d9d9;border-radius:4px;background:#fafafa"></div>
<div class="t" style="left:2527.5px;top:1369.1px;font-size:22px;line-height:22px;color:#595959;font-weight:normal;">系统<span style="letter-spacing:-0.8px">...</span></div>
<div class="t" style="left:2722.5px;top:1352.2px;font-size:25px;line-height:25px;color:#5c40e0;font-weight:normal;">编辑</div>
<div class="t" style="left:2790.5px;top:1352.2px;font-size:25px;line-height:25px;color:#5c40e0;font-weight:normal;">运行</div>
<div style="position:absolute;left:2726.0px;top:1398.4px;width:5px;height:5px;border-radius:50%;background:#111"></div>
<div style="position:absolute;left:2737.4px;top:1398.4px;width:5px;height:5px;border-radius:50%;background:#111"></div>
<div style="position:absolute;left:2748.8px;top:1398.4px;width:5px;height:5px;border-radius:50%;background:#111"></div>
<div style="position:absolute;left:691px;top:1452px;width:2210px;height:1px;background:#efefef"></div>
</body></html>
